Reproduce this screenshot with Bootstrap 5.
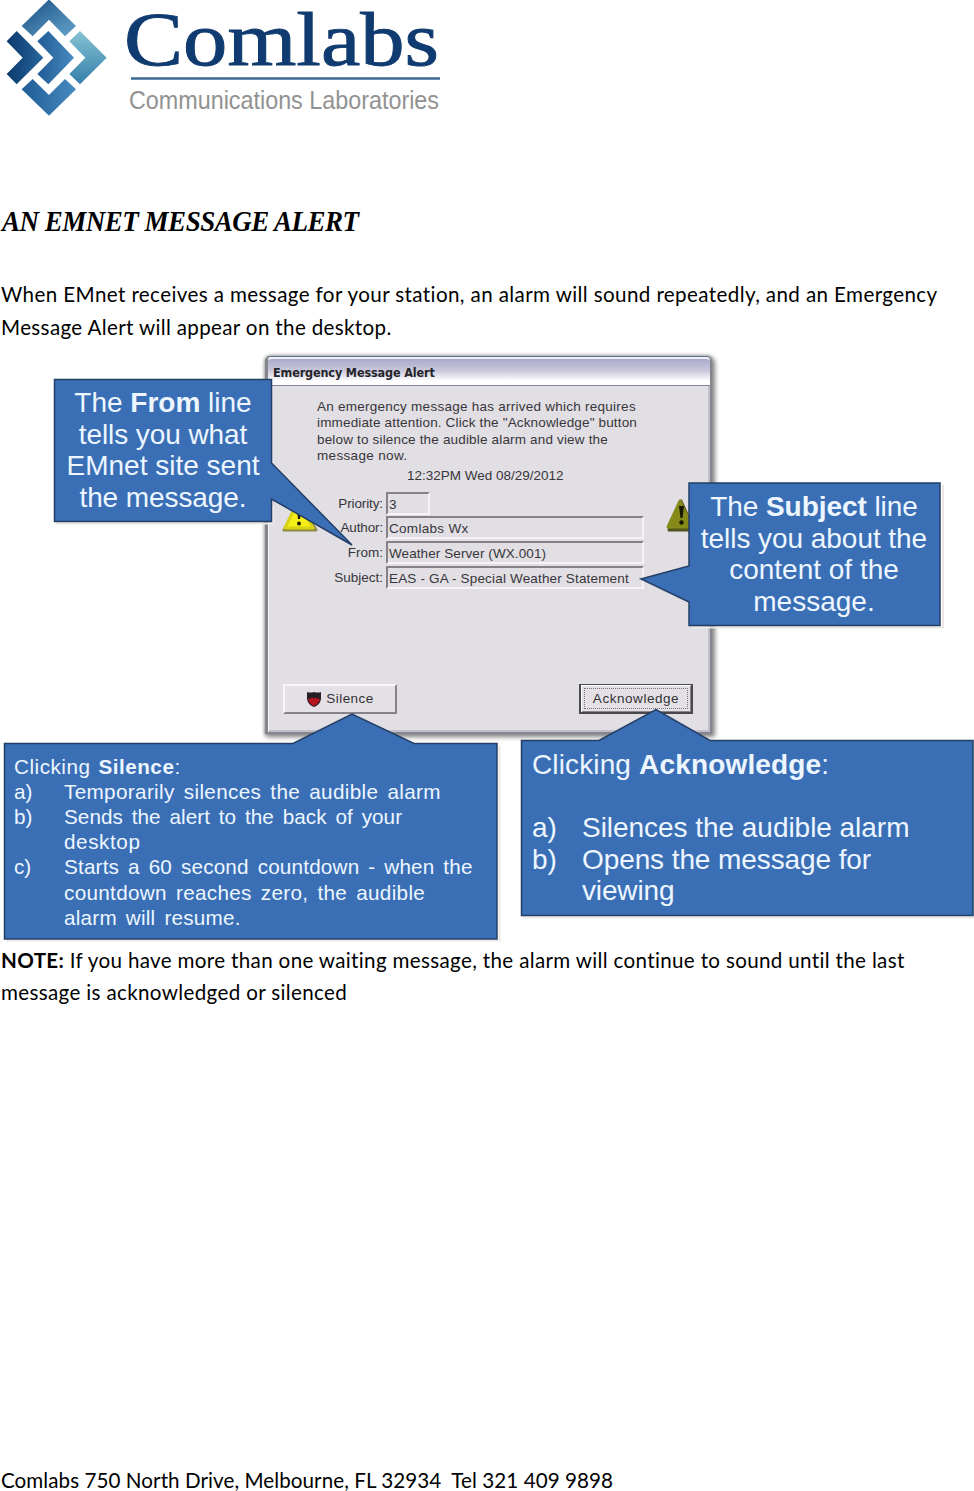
<!DOCTYPE html>
<html lang="en">
<head>
<meta charset="utf-8">
<meta name="viewport" content="width=device-width, initial-scale=1">
<title>EMnet Message Alert</title>
<link href="https://cdn.jsdelivr.net/npm/bootstrap@5.3.0/dist/css/bootstrap.min.css" rel="stylesheet">
<style>
body{font-family:Lato,sans-serif;font-size:20.6px;line-height:32.4px;color:#000;background:#fff}
.sheet{width:974px;height:1491px}
.fit{display:inline-block;white-space:nowrap}
.brand-logo{display:block;height:122px;overflow:visible}
.doc-title{font:italic 700 30px/36px "Liberation Serif",serif;margin:81px 0 0 2px;transform:scaleX(.9);transform-origin:left}
.intro{margin-top:39px;line-height:33px}
.copy{padding-left:1px}
.figure-area{height:599px;margin-top:1px;font-family:"Liberation Sans",sans-serif}
.alert-window{width:447px;height:378px;margin-left:265px;top:11px;background:#e1dee4;border:2px solid #85858d;border-top:1px solid #5d7187;border-left-width:3px;border-radius:5px 5px 0 0;box-shadow:inset 1px 0 #f5f3f8,inset -2px -2px #c1bfcb,2px 2px 5px 1px #888,0 0 3px 1px #bbb;font-size:13.5px;line-height:16.35px;color:#38363b}
.title-strip{height:29px;padding:0 0 0 5px;border-top:2px solid #f0f0fa;border-bottom:1px solid #84849b;border-radius:4px 4px 0 0;background:linear-gradient(#aaa9ca,#c9c8dc 45%,#fff 85%);font:700 12.5px/27px "DejaVu Sans Condensed","Open Sans",sans-serif;color:#252429}
.alert-text{margin:13px 0 0 49px}
.stamp{margin:4px 0 0 139px}
.fields{margin-top:7px}
.field-row{height:24.6px}
.field-label{width:115px;text-align:right;line-height:23px}
.field-box{width:258px;height:23px;margin-left:3px;padding-left:1px;border:2px solid;border-color:#858189 #f5f3f6 #f5f3f6 #858189;line-height:21px}
.field-box.narrow{width:44px}
.win-btn{width:114px;height:30px;background:#e4e1e6;border:2px solid;border-color:#f8f6fa #86828a #86828a #f8f6fa;color:#343237}
.win-btn.default-btn{border:2px solid #4b484d;border-top-width:1px;box-shadow:inset 1px 1px #fff,inset -1px -1px #89858d}
.focus-box{border:1px dotted #77747a;margin:3px;height:21px;line-height:20px}
.win-actions{margin:94px 17px 0 15px}
.overlay,.callout{position:absolute}
.overlay{left:0;top:0}
.callout{color:#edf6ff;white-space:nowrap}
.callout-lg{font-size:28px;line-height:31.5px}
.callout-sm{font-size:20.7px;line-height:25.2px;word-spacing:3px}
.from-tip{left:54px;top:42px;width:218px}
.subject-tip{left:689px;top:146px;width:250px}
.silence-tip{left:14px;top:408.500px}
.ack-tip{left:532px;top:404px}
.marker{width:50px;flex:none}
.footer-line{margin-top:459px;line-height:25px}
</style>
</head>
<body>
<main class="sheet">
<header>
<svg class="brand-logo" width="974" height="122" viewBox="0 0 974 122">
<defs>
<linearGradient id="g1" x1="0" y1="0" x2="1" y2="1"><stop stop-color="#174d81"/><stop offset="1" stop-color="#65a4cb"/></linearGradient>
<linearGradient id="g2" x1="0" y1="0" x2="1" y2="0"><stop stop-color="#0b3a6c"/><stop offset="1" stop-color="#28659c"/></linearGradient>
<linearGradient id="g3" x1="0" y1="0" x2="1" y2="0"><stop stop-color="#205b95"/><stop offset="1" stop-color="#478bc0"/></linearGradient>
<linearGradient id="g4" x1="0" y1="0" x2="0" y2="1"><stop stop-color="#87c3d3"/><stop offset="1" stop-color="#347fab"/></linearGradient>
</defs>
<g transform="scale(.33333)">
<path fill="url(#g1)" d="M147-2 228 78 195 109 147 59 98 109 65 78Z"/>
<path fill="url(#g2)" d="M50 93 130 173 50 253 20 222 68 173 20 124Z"/>
<path fill="url(#g3)" d="M145 93 222 173 145 253 112 222 160 173 112 124Z"/>
<path fill="url(#g4)" d="M240 93 320 173 240 253 208 222 256 173 208 124Z"/>
<path fill="url(#g3)" d="M65 268 98 237 147 285 195 237 228 268 147 347Z"/>
</g>
<text x="124" y="65" font-family="Liberation Serif, serif" font-size="76" textLength="315" lengthAdjust="spacingAndGlyphs" fill="#103b70" stroke="#103b70" stroke-width=".9">Comlabs</text>
<path d="M131 78.500H440" stroke="#3d6a94" stroke-width="2.600"/>
<text x="129" y="109" font-family="Liberation Sans, sans-serif" font-size="25.500" textLength="310" lengthAdjust="spacingAndGlyphs" fill="#929292">Communications Laboratories</text>
</svg>
</header>

<h1 class="doc-title"><span class="fit" data-w="396">AN EMNET MESSAGE ALERT</span></h1>

<p class="copy intro mb-0"><span class="fit" data-w="937">When EMnet receives a message for your station, an alarm will sound repeatedly, and an Emergency</span><br><span class="fit" data-w="391">Message Alert will appear on the desktop.</span></p>

<section class="figure-area position-relative">
<div class="alert-window position-relative">
<div class="title-strip"><span class="fit" data-w="162">Emergency Message Alert</span></div>
<div class="alert-text">
<span class="fit" data-w="319">An emergency message has arrived which requires</span><br><span class="fit" data-w="320">immediate attention. Click the "Acknowledge" button</span><br><span class="fit" data-w="291">below to silence the audible alarm and view the</span><br><span class="fit" data-w="90">message now.</span>
</div>
<div class="stamp"><span class="fit" data-w="157">12:32PM Wed 08/29/2012</span></div>
<div class="fields">
<div class="field-row d-flex"><div class="field-label"><span class="fit" data-w="45">Priority:</span></div><div class="field-box narrow">3</div></div>
<div class="field-row d-flex"><div class="field-label"><span class="fit" data-w="43">Author:</span></div><div class="field-box"><span class="fit" data-w="80">Comlabs Wx</span></div></div>
<div class="field-row d-flex"><div class="field-label"><span class="fit" data-w="35">From:</span></div><div class="field-box"><span class="fit" data-w="157">Weather Server (WX.001)</span></div></div>
<div class="field-row d-flex"><div class="field-label"><span class="fit" data-w="49">Subject:</span></div><div class="field-box"><span class="fit" data-w="240">EAS - GA - Special Weather Statement</span></div></div>
</div>
<div class="win-actions d-flex justify-content-between">
<div class="win-btn d-flex align-items-center justify-content-center gap-1">
<svg width="16" height="16" viewBox="0 0 16 16"><path d="M1 1Q4 2 8 1 12 2 15 1V8Q14 14 8 16 2 14 1 8Z" fill="#262024"/><path d="M2 8Q8 6 14 8 13 13 8 15 3 13 2 8Z" fill="#b51620"/></svg>
<span class="fit" data-w="47">Silence</span></div>
<div class="win-btn default-btn"><div class="focus-box text-center"><span class="fit" data-w="86">Acknowledge</span></div></div>
</div>
</div>

<svg class="overlay" width="974" height="599" viewBox="0 345 974 599">
<g stroke-linejoin="round">
<path d="M299 502 316 530H284Z" fill="#8d8b45" stroke="#8d8b45" stroke-width="3"/>
<path d="M298 501 313 528H285Z" fill="#f5ef18" stroke="#d8d215" stroke-width="3"/>
<path d="M681 501 694 530H669Z" fill="#52521b" stroke="#52521b" stroke-width="3"/>
<path d="M680 501 692 527H668Z" fill="#858a18" stroke="#858a18" stroke-width="3"/>
</g>
<path d="M297 509H301L300 519H298ZM679 506H684L682.500 518H680.500Z" fill="#171704"/><circle cx="299" cy="523.500" r="2" fill="#171704"/><circle cx="681.500" cy="522.500" r="2.200" fill="#171704"/>
<g fill="none" stroke="#ece9e4" stroke-width="2">
<path d="M56 523.500H273V506M691 627.500H943V485M6 940.500H499.500V746M523 917.500H974"/>
</g>
<g fill="#3a6fb6" stroke="#233f66" stroke-width="1.500">
<path d="M54.500 379.500H271.500V463L352 545 271.500 499V521.500H54.500Z"/>
<path d="M689 483H940V625.500H689V602L641 579 689 566Z"/>
<path d="M4.500 743.500H293L352 714 414 743.500H497V939H4.500Z"/>
<path d="M521.500 740.500H599L656 709.500 710 740.500H973V915.500H521.500Z"/>
</g>
</svg>

<div class="callout callout-lg from-tip text-center"><span class="fit" data-w="177">The <b>From</b> line</span><br><span class="fit" data-w="169">tells you what</span><br><span class="fit" data-w="193">EMnet site sent</span><br><span class="fit" data-w="167">the message.</span></div>
<div class="callout callout-lg subject-tip text-center"><span class="fit" data-w="208">The <b>Subject</b> line</span><br><span class="fit" data-w="226">tells you about the</span><br><span class="fit" data-w="170">content of the</span><br><span class="fit" data-w="121">message.</span></div>
<div class="callout callout-sm silence-tip">
<div><span class="fit" data-w="76">Clicking</span><span class="fit ms-2" data-w="82"><b>Silence</b>:</span></div>
<div class="d-flex"><span class="marker">a)</span><span class="fit" data-w="377">Temporarily silences the audible alarm</span></div>
<div class="d-flex"><span class="marker">b)</span><div><span class="fit" data-w="338">Sends the alert to the back of your</span><br><span class="fit" data-w="76">desktop</span></div></div>
<div class="d-flex"><span class="marker">c)</span><div><span class="fit" data-w="409">Starts a 60 second countdown - when the</span><br><span class="fit" data-w="361">countdown reaches zero, the audible</span><br><span class="fit" data-w="177">alarm will resume.</span></div></div>
</div>
<div class="callout callout-lg ack-tip">
<div><span class="fit" data-w="99">Clicking</span><span class="fit ms-2" data-w="190"><b>Acknowledge</b>:</span></div>
<div>&nbsp;</div>
<div class="d-flex"><span class="marker">a)</span><span class="fit" data-w="327">Silences the audible alarm</span></div>
<div class="d-flex"><span class="marker">b)</span><div><span class="fit" data-w="289">Opens the message for</span><br><span class="fit" data-w="92">viewing</span></div></div>
</div>
</section>

<p class="copy mb-0"><span class="fit" data-w="905"><b>NOTE:</b> If you have more than one waiting message, the alarm will continue to sound until the last</span><br><span class="fit" data-w="346">message is acknowledged or silenced</span></p>
<footer class="copy footer-line"><span class="fit" data-w="612">Comlabs 750 North Drive, Melbourne, FL 32934&nbsp; Tel 321 409 9898</span></footer>
</main>
<script src="https://cdn.jsdelivr.net/npm/bootstrap@5.3.0/dist/js/bootstrap.bundle.min.js"></script>
<script>
// Track each line so that it fills its set measure.
document.querySelectorAll('.fit').forEach(function (el) {
  var gap = el.dataset.w - el.offsetWidth;
  el.style.letterSpacing = (gap / el.textContent.length).toFixed(4) + 'px';
});
</script>
</body>
</html>
